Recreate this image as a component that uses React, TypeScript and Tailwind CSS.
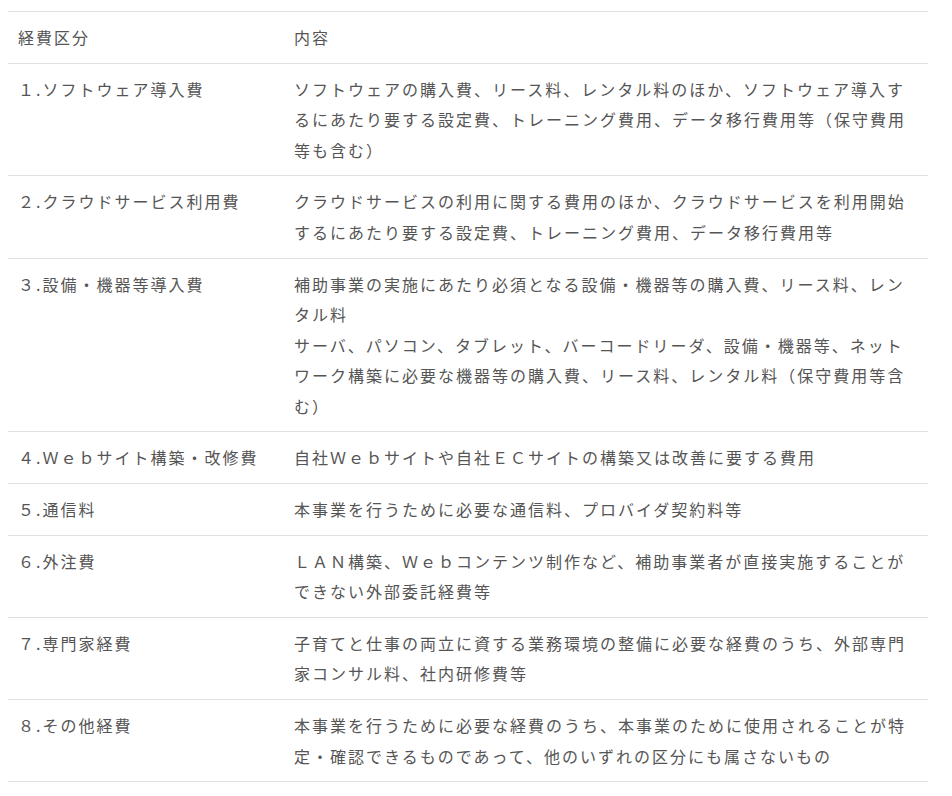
const rows: { label: string; body: React.ReactNode }[] = [
  {
    label: '１.ソフトウェア導入費',
    body: 'ソフトウェアの購入費、リース料、レンタル料のほか、ソフトウェア導入するにあたり要する設定費、トレーニング費用、データ移行費用等（保守費用等も含む）',
  },
  {
    label: '２.クラウドサービス利用費',
    body: 'クラウドサービスの利用に関する費用のほか、クラウドサービスを利用開始するにあたり要する設定費、トレーニング費用、データ移行費用等',
  },
  {
    label: '３.設備・機器等導入費',
    body: (
      <>
        補助事業の実施にあたり必須となる設備・機器等の購入費、リース料、レンタル料
        <br />
        サーバ、パソコン、タブレット、バーコードリーダ、設備・機器等、ネットワーク構築に必要な機器等の購入費、リース料、レンタル料（保守費用等含む）
      </>
    ),
  },
  {
    label: '４.Ｗｅｂサイト構築・改修費',
    body: '自社Ｗｅｂサイトや自社ＥＣサイトの構築又は改善に要する費用',
  },
  {
    label: '５.通信料',
    body: '本事業を行うために必要な通信料、プロバイダ契約料等',
  },
  {
    label: '６.外注費',
    body: 'ＬＡＮ構築、Ｗｅｂコンテンツ制作など、補助事業者が直接実施することができない外部委託経費等',
  },
  {
    label: '７.専門家経費',
    body: '子育てと仕事の両立に資する業務環境の整備に必要な経費のうち、外部専門家コンサル料、社内研修費等',
  },
  {
    label: '８.その他経費',
    body: '本事業を行うために必要な経費のうち、本事業のために使用されることが特定・確認できるものであって、他のいずれの区分にも属さないもの',
  },
];

export default function App() {
  return (
    <div className="min-h-[796px] bg-white pt-[11px] pl-2">
      <table
        className="w-[920px] table-fixed border-collapse text-[16px] leading-[30.5px] tracking-[2px] text-[#555]"
        style={{ fontFamily: '"Noto Sans CJK JP", "Noto Sans", sans-serif' }}
      >
        <colgroup>
          <col className="w-[276px]" />
          <col />
        </colgroup>
        <thead>
          <tr className="border-y border-[#e0e0e0]">
            <th className="px-[10px] pt-[10px] pb-[10.2px] text-left font-normal">経費区分</th>
            <th className="px-[10px] pt-[10px] pb-[10.2px] text-left font-normal">内容</th>
          </tr>
        </thead>
        <tbody>
          {rows.map((r) => (
            <tr key={r.label} className="border-b border-[#e0e0e0]">
              <td className="px-[10px] pt-[10px] pb-[10.2px] align-top">{r.label}</td>
              <td className="px-[10px] pt-[10px] pb-[10.2px] align-top">{r.body}</td>
            </tr>
          ))}
        </tbody>
      </table>
    </div>
  );
}
